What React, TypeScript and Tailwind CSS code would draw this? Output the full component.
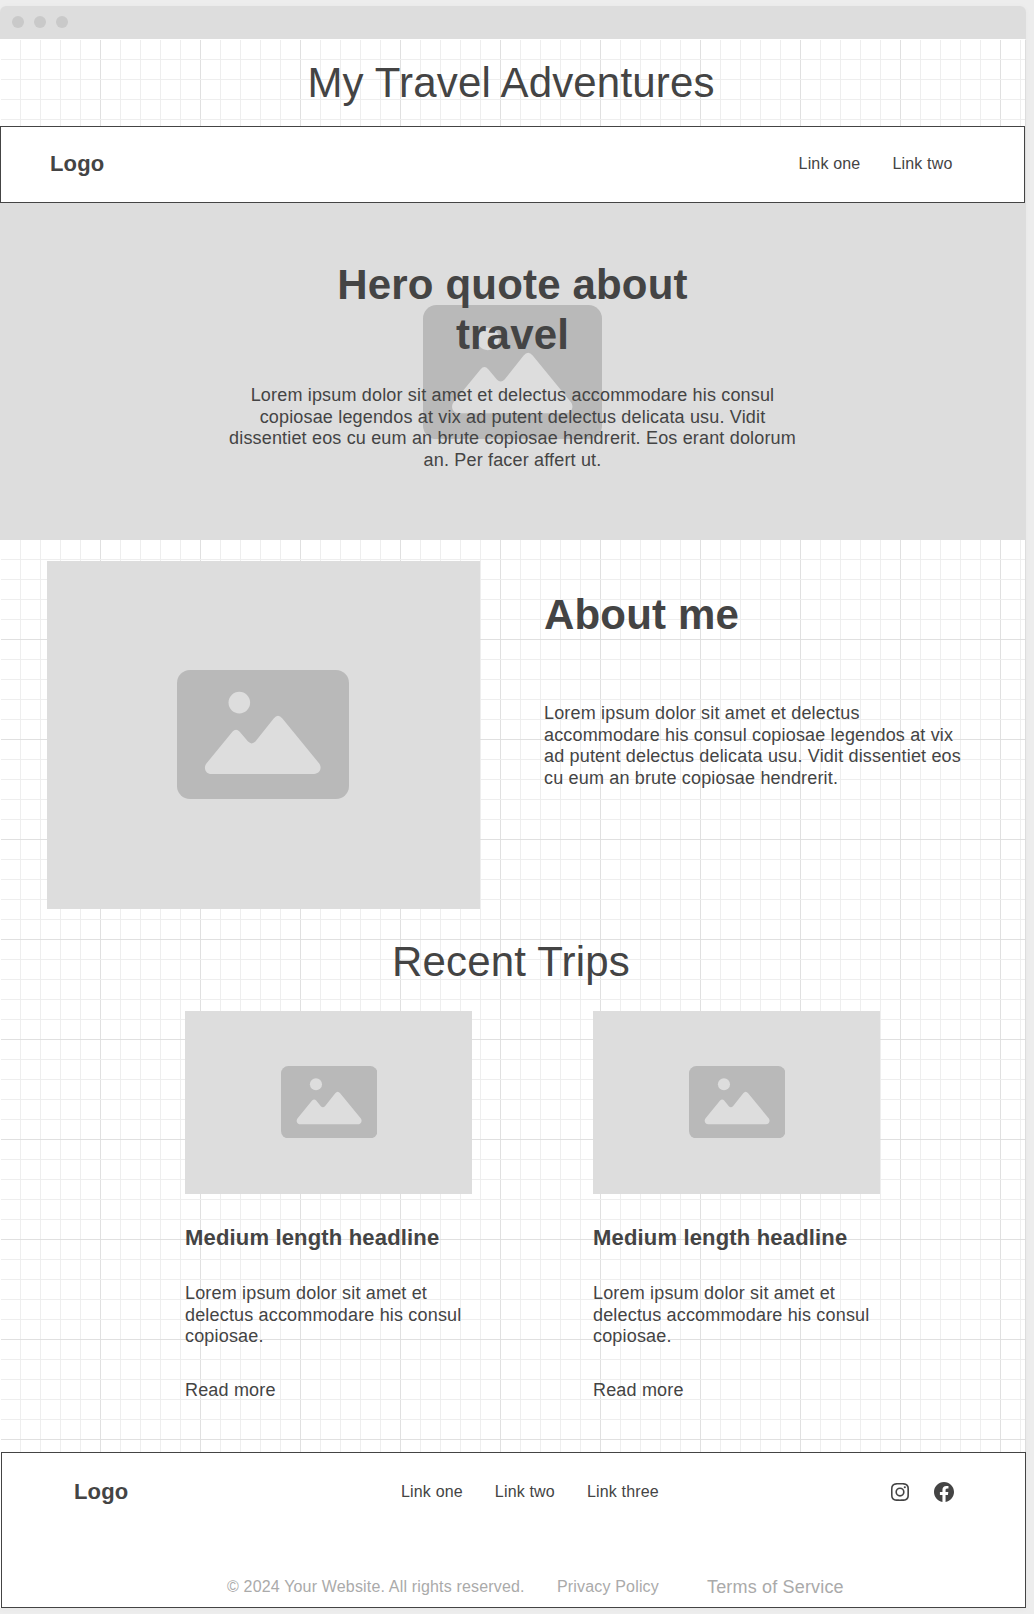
import React from "react";
import { BiLogoInstagram, BiLogoFacebookCircle } from "react-icons/bi";

function ImageGlyph({ className }: { className: string }) {
  return (
    <svg viewBox="0 0 172 129" className={className} aria-hidden="true">
      <rect width="172" height="129" rx="13" fill="#b9b9b9" />
      <circle cx="62.3" cy="32.6" r="10.8" fill="#ddd" />
      <path
        fill="#ddd"
        d="M34.5 104C28.5 104 26 97.5 29.6 93.2L55.4 61.7Q59 57.6 62.7 61.7L71 71.6Q74.7 75.2 78.4 71.6L96.7 48.6Q101 43 105.4 48.6L142 93.2C145.5 97.5 143 104 137 104Z"
      />
    </svg>
  );
}

function Trip() {
  return (
    <article className="w-[287px]">
      <div className="flex h-[183px] items-center justify-center bg-[#ddd] pb-px pl-px">
        <ImageGlyph className="w-[96.5px]" />
      </div>
      <h3 className="mt-[31px] text-[22px] leading-[26.4px] font-bold">Medium length headline</h3>
      <p className="mt-[31.5px] text-[18px] leading-[21.6px] whitespace-nowrap">
        Lorem ipsum dolor sit amet et
        <br />
        delectus accommodare his consul
        <br />
        copiosae.
      </p>
      <a className="mt-[32.1px] block text-[18px] leading-[21.6px]">Read more</a>
    </article>
  );
}

export default function App() {
  return (
    <div className="h-[1614px] w-full overflow-hidden bg-[#ededed] pt-1.5 font-['Liberation_Sans',Arial,sans-serif] tracking-[0.17px] text-[#444]">
      <div className="h-[1602px] w-[1026px] rounded-t-md shadow-[0_1px_6px_rgba(0,0,0,0.03)]">
        <div className="flex h-[33px] items-center gap-2.5 rounded-t-md bg-[#ddd] pb-px pl-3">
          <span className="size-3 rounded-full bg-[#c9c9c9]" />
          <span className="size-3 rounded-full bg-[#c9c9c9]" />
          <span className="size-3 rounded-full bg-[#c9c9c9]" />
        </div>

        <div className="flex h-[1569px] flex-col border-t border-r border-l border-t-white border-r-[#ddd] border-l-white bg-white bg-[linear-gradient(#e0e0e0_1px,transparent_1px),linear-gradient(#eee_1px,transparent_1px),linear-gradient(90deg,#e0e0e0_1px,transparent_1px),linear-gradient(90deg,#eee_1px,transparent_1px)] bg-[size:100px_100px,20px_20px,100px_100px,20px_20px] bg-origin-border">
          <h1 className="mt-[18px] h-[68px] pr-1 text-center text-[42px] leading-[50.4px]">My Travel Adventures</h1>

          <nav className="-ml-px flex h-[77px] w-[1025px] shrink-0 items-center border border-[#444] bg-white pr-[71.5px] pl-[49px]">
            <span className="text-[22px] leading-[26.4px] font-bold">Logo</span>
            <div className="ml-auto flex gap-8 pb-[2px] text-[16px] leading-[19.2px]">
              <a>Link one</a>
              <a>Link two</a>
            </div>
          </nav>

          <section className="relative -ml-px h-[337px] w-[1026px] shrink-0 bg-[#ddd] text-center">
            <div className="absolute inset-0 flex items-center justify-center pt-px pr-[0.6px]">
              <ImageGlyph className="w-[179px]" />
            </div>
            <div className="relative pt-[57px] pr-px">
              <h2 className="text-[42px] leading-[50.4px] font-bold">
                Hero quote about
                <br />
                travel
              </h2>
              <p className="mt-[24.1px] text-[18px] leading-[21.6px]">
                Lorem ipsum dolor sit amet et delectus accommodare his consul
                <br />
                copiosae legendos at vix ad putent delectus delicata usu. Vidit
                <br />
                dissentiet eos cu eum an brute copiosae hendrerit. Eos erant dolorum
                <br />
                an. Per facer affert ut.
              </p>
            </div>
          </section>

          <section className="mt-[21px] flex h-[348px] shrink-0 gap-16 pl-[46px]">
            <div className="flex w-[433px] items-center justify-center bg-[#ddd] pr-px pb-[0.4px]">
              <ImageGlyph className="w-[172px]" />
            </div>
            <div className="pt-[28.6px] whitespace-nowrap">
              <h2 className="text-[42px] leading-[50.4px] font-bold">About me</h2>
              <p className="mt-[63.1px] text-[18px] leading-[21.6px]">
                Lorem ipsum dolor sit amet et delectus
                <br />
                accommodare his consul copiosae legendos at vix
                <br />
                ad putent delectus delicata usu. Vidit dissentiet eos
                <br />
                cu eum an brute copiosae hendrerit.
              </p>
            </div>
          </section>

          <h2 className="mt-7 h-[74px] shrink-0 pr-1 text-center text-[42px] leading-[50.4px]">Recent Trips</h2>

          <section className="flex h-[441px] shrink-0 gap-[121px] pl-[184px]">
            <Trip />
            <Trip />
          </section>

          <footer className="h-[156px] w-[1025px] shrink-0 border border-[#444] bg-white">
            <div className="flex h-[78px] items-center pl-[72px]">
              <span className="w-[327px] text-[22px] leading-[26.4px] font-bold">Logo</span>
              <div className="flex gap-8 text-[16px] leading-[19.2px]">
                <a>Link one</a>
                <a>Link two</a>
                <a>Link three</a>
              </div>
              <div className="mr-[69px] ml-auto flex gap-5">
                <BiLogoInstagram className="size-6" />
                <BiLogoFacebookCircle className="size-6" />
              </div>
            </div>
            <div className="mt-[45px] flex items-start pl-[225px] text-[16px] leading-[19.2px] text-[#aaa]">
              <span className="w-[330px] pt-[1.4px]">© 2024 Your Website. All rights reserved.</span>
              <a className="w-[150px] pt-[1.4px]">Privacy Policy</a>
              <a className="pt-[0.6px] text-[18px] leading-[21.6px]">Terms of Service</a>
            </div>
          </footer>
        </div>
      </div>
    </div>
  );
}
